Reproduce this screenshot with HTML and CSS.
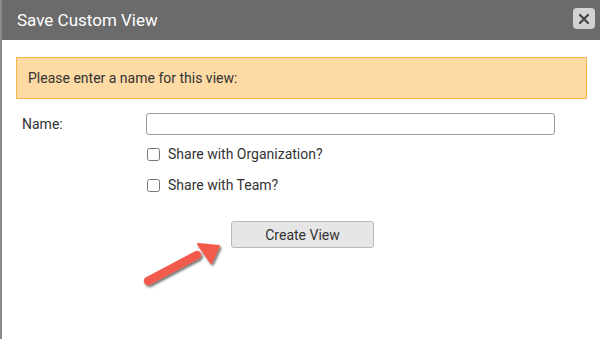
FILE: index.html
```html
<!DOCTYPE html>
<html lang="en">
<head>
  <meta charset="UTF-8" />
  <meta name="viewport" content="width=device-width, initial-scale=1" />
  <title>Save Custom View</title>
  <link rel="stylesheet" href="styles.css">
</head>
<body>
<div class="dialog">
  <header class="dialog-header">
    <h1 class="dialog-title">Save Custom View</h1>
    <button class="dialog-close" aria-label="Close" title="Close">
      <svg width="12" height="12" viewBox="0 0 12 12" aria-hidden="true">
        <path d="M2 2 L10 10 M10 2 L2 10" stroke="#444" stroke-width="2.2" stroke-linecap="round" fill="none"/>
      </svg>
    </button>
  </header>
  <main class="dialog-body">
    <div class="alert">Please enter a name for this view:</div>
    <form class="view-form" onsubmit="return false;">
      <label class="form-label" for="view-name">Name:</label>
      <input type="text" id="view-name" class="form-input" />
      <label class="form-check">
        <input type="checkbox" />
        <span>Share with Organization?</span>
      </label>
      <label class="form-check">
        <input type="checkbox" />
        <span>Share with Team?</span>
      </label>
      <div class="form-actions">
        <button type="submit" class="btn">Create View</button>
      </div>
    </form>
  </main>
  <svg class="callout-arrow" width="100" height="60" viewBox="0 0 100 60" aria-hidden="true">
    <defs>
      <filter id="arrow-shadow" x="-20%" y="-20%" width="150%" height="150%">
        <feDropShadow dx="1.5" dy="2" stdDeviation="1.2" flood-color="#000" flood-opacity="0.55"/>
      </filter>
    </defs>
    <g filter="url(#arrow-shadow)" fill="#f25a4b" stroke="#f25a4b">
      <line x1="14" y1="49" x2="63" y2="23" stroke-width="8.5" stroke-linecap="round"/>
      <polygon points="85,14 64,12 77,31" stroke-width="2" stroke-linejoin="round"/>
    </g>
  </svg>
</div>
</body>
</html>
```

FILE: styles.css
```css
body {
  margin: 0;
  font-family: Roboto, 'Liberation Sans', sans-serif;
  background: white;
  color: #333;
}
.dialog {
  position: relative;
  min-height: 339px;
  border-left: 2px solid #8a8a8a;
  box-sizing: border-box;
}
.dialog-header {
  height: 40px;
  background: #6b6b6b;
  display: flex;
  align-items: center;
  justify-content: space-between;
  padding: 0 5px 0 15px;
}
.dialog-title {
  margin: 0;
  font-size: 17px;
  font-weight: 400;
  color: white;
}
.dialog-close {
  width: 22px;
  height: 21px;
  margin-bottom: 3px;
  border: none;
  border-radius: 4px;
  background: #d2d2d2;
  display: flex;
  align-items: center;
  justify-content: center;
  padding: 0;
  cursor: pointer;
}
.dialog-body {
  padding: 17px 13px 0 14px;
}
.alert {
  height: 40px;
  background: #fedaa5;
  border: 1px solid #f8b24c;
  padding: 0 11px;
  font-size: 14px;
  display: flex;
  align-items: center;
}
.view-form {
  display: grid;
  grid-template-columns: 124px 409px;
  align-items: center;
  margin-top: 14px;
  padding-left: 6px;
  font-size: 14px;
}
.form-label {
  grid-column: 1;
  padding-bottom: 1px;
}
.form-input {
  grid-column: 2;
  height: 22px;
  box-sizing: border-box;
  border: 1px solid #9a9a9a;
  border-radius: 3px;
  margin: 0;
  font: inherit;
}
.form-check {
  grid-column: 2;
  display: flex;
  align-items: center;
  gap: 8px;
  margin-top: 9px;
  height: 20px;
  padding-left: 1px;
}
.form-check + .form-check {
  margin-top: 11px;
}
.form-check input {
  width: 13px;
  height: 13px;
  margin: 0;
}
.form-actions {
  grid-column: 1 / span 2;
  display: flex;
  margin-top: 26px;
  padding-left: 209px;
}
.btn {
  width: 143px;
  height: 27px;
  background: #e6e6e6;
  border: 1px solid #b9b9b9;
  border-radius: 3px;
  font: inherit;
  color: #333;
  cursor: pointer;
}
.callout-arrow {
  position: absolute;
  left: 132px;
  top: 232px;
}
```
